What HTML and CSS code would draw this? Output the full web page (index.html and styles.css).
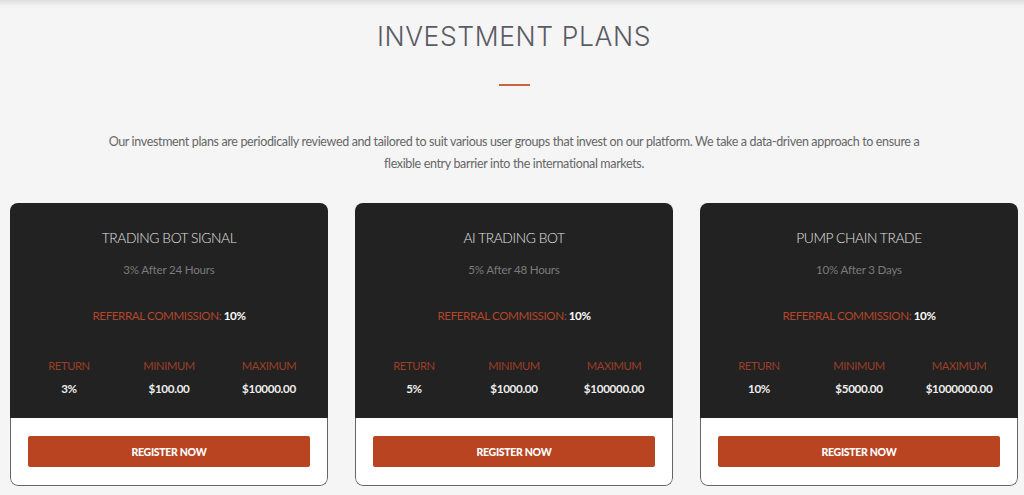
FILE: index.html
```html
<!DOCTYPE html>
<html>
<head>
<meta charset="utf-8">
<link rel="stylesheet" href="styles.css">
</head>
<body>
<section class="plans">
  <h1 class="title">INVESTMENT PLANS</h1>
  <div class="rule"></div>
  <p class="intro">Our investment plans are periodically reviewed and tailored to suit various user groups that invest on our platform. We take a data-driven approach to ensure a flexible entry barrier into the international markets.</p>
  <div class="cards">
    <div class="card">
      <div class="card-top">
        <h2 class="card-title">TRADING BOT SIGNAL</h2>
        <div class="card-sub">3% After 24 Hours</div>
        <div class="ref"><span class="ref-label">REFERRAL COMMISSION:</span> <b>10%</b></div>
        <div class="stats">
          <div class="stat"><span class="stat-label">RETURN</span><span class="stat-val">3%</span></div>
          <div class="stat"><span class="stat-label">MINIMUM</span><span class="stat-val">$100.00</span></div>
          <div class="stat"><span class="stat-label">MAXIMUM</span><span class="stat-val">$10000.00</span></div>
        </div>
      </div>
      <div class="card-bottom"><a class="btn">REGISTER NOW</a></div>
    </div>
    <div class="card">
      <div class="card-top">
        <h2 class="card-title">AI TRADING BOT</h2>
        <div class="card-sub">5% After 48 Hours</div>
        <div class="ref"><span class="ref-label">REFERRAL COMMISSION:</span> <b>10%</b></div>
        <div class="stats">
          <div class="stat"><span class="stat-label">RETURN</span><span class="stat-val">5%</span></div>
          <div class="stat"><span class="stat-label">MINIMUM</span><span class="stat-val">$1000.00</span></div>
          <div class="stat"><span class="stat-label">MAXIMUM</span><span class="stat-val">$100000.00</span></div>
        </div>
      </div>
      <div class="card-bottom"><a class="btn">REGISTER NOW</a></div>
    </div>
    <div class="card">
      <div class="card-top">
        <h2 class="card-title">PUMP CHAIN TRADE</h2>
        <div class="card-sub">10% After 3 Days</div>
        <div class="ref"><span class="ref-label">REFERRAL COMMISSION:</span> <b>10%</b></div>
        <div class="stats">
          <div class="stat"><span class="stat-label">RETURN</span><span class="stat-val">10%</span></div>
          <div class="stat"><span class="stat-label">MINIMUM</span><span class="stat-val">$5000.00</span></div>
          <div class="stat"><span class="stat-label">MAXIMUM</span><span class="stat-val">$1000000.00</span></div>
        </div>
      </div>
      <div class="card-bottom"><a class="btn">REGISTER NOW</a></div>
    </div>
  </div>
</section>
</body>
</html>
```
FILE: styles.css
```css
html, body {
  margin: 0;
  padding: 0;
  height: 100%;
  overflow: hidden;
}
body {
  font-family: "Lato", "Noto Sans", sans-serif;
  background: linear-gradient(#dedede 0px, #f3f3f4 6px, #f5f5f6 10px);
}
.plans {
  display: flex;
  flex-direction: column;
  align-items: center;
  padding: 21px 0 0 4px;
}
.title {
  margin: 0;
  font-family: "Inter", "Lato", sans-serif;
  font-weight: 300;
  font-size: 26.5px;
  line-height: 30px;
  letter-spacing: 0.6px;
  color: #5b5b63;
}
.rule {
  width: 31px;
  height: 2px;
  background: #c9643f;
  margin-top: 33px;
}
.intro {
  margin: 45px 0 0;
  width: 830px;
  text-align: center;
  font-size: 12.5px;
  line-height: 22px;
  letter-spacing: -0.35px;
  color: #666;
}
.cards {
  display: flex;
  gap: 27px;
  margin-top: 28px;
}
.card {
  width: 318px;
  border-radius: 8px;
  overflow: hidden;
  display: flex;
  flex-direction: column;
}
.card-top {
  background: #222222;
  height: 215px;
  display: flex;
  flex-direction: column;
  align-items: center;
  padding-top: 25px;
  box-sizing: border-box;
}
.card-title {
  margin: 0;
  font-weight: 300;
  font-size: 13.8px;
  letter-spacing: -0.4px;
  line-height: 20px;
  color: #e0e0e0;
}
.card-sub {
  margin-top: 14px;
  font-size: 11.6px;
  letter-spacing: -0.2px;
  line-height: 16px;
  color: #7a7a7a;
}
.ref {
  margin-top: 30px;
  font-size: 11.6px;
  letter-spacing: -0.4px;
  line-height: 16px;
  color: #fff;
}
.ref-label { color: #b5462a; }
.ref b { font-weight: 700; }
.stats {
  display: grid;
  grid-template-columns: repeat(3, 100px);
  margin-top: 34px;
}
.stat {
  display: flex;
  flex-direction: column;
  align-items: center;
  gap: 7px;
}
.stat-label {
  font-size: 11.2px;
  letter-spacing: -0.4px;
  line-height: 16px;
  color: #9c3f26;
}
.stat-val {
  font-size: 11.6px;
  letter-spacing: -0.3px;
  line-height: 16px;
  font-weight: 700;
  color: #eee;
}
.card-bottom {
  background: #fff;
  border: 1px solid #666;
  border-top: none;
  border-radius: 0 0 8px 8px;
  height: 68px;
  box-sizing: border-box;
  padding: 18px 17px 0;
}
.btn {
  display: flex;
  align-items: center;
  justify-content: center;
  height: 31px;
  background: #b84421;
  border-radius: 2px;
  color: #fff;
  font-weight: 900;
  font-size: 10.5px;
  letter-spacing: -0.3px;
}
```
